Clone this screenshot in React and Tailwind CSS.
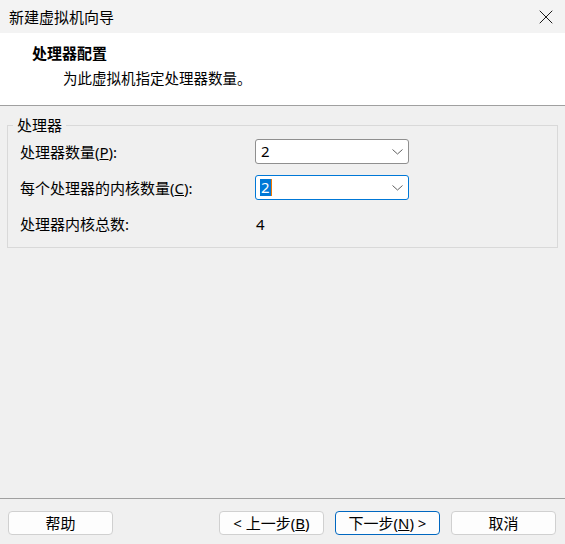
import { X } from 'lucide-react';

const font = "font-['Noto_Sans','Noto_Sans_CJK_SC',sans-serif]";

function Chevron() {
    return (
        <svg width="11" height="6" viewBox="0 0 11 6" className="shrink-0">
            <path d="M0.5 0.5 L5.5 5 L10.5 0.5" fill="none" stroke="#606060" strokeWidth="1" />
        </svg>
    );
}

function Combo({ value, focused }) {
    return (
        <div className={`w-[154px] h-[25px] bg-white rounded-[3px] border flex items-center pl-[4px] pr-[5px] ${focused ? 'border-[#0078d7]' : 'border-[#8f8f8f]'}`}>
            {focused ? (
                <span className="flex items-center">
                    <span className="bg-[#0078d7] text-white leading-[17px] px-[1px]">{value}</span>
                    <span className="w-[1.5px] h-[17px] bg-[#f07800]" />
                </span>
            ) : (
                <span className="leading-[17px] px-[1px]">{value}</span>
            )}
            <span className="flex-1" />
            <Chevron />
        </div>
    );
}

function Btn({ children, primary }) {
    return (
        <button className={`w-[105px] h-[24px] rounded-[4px] bg-[#fdfdfd] border text-[15px] leading-none flex items-center justify-center ${primary ? 'border-[#0067c0]' : 'border-[#d0d0d0]'}`}>
            {children}
        </button>
    );
}

export default function App() {
    return (
        <div className={`w-[565px] h-[544px] bg-[#f0f0f0] flex flex-col text-black text-[15px] ${font}`}>
            {/* title bar */}
            <div className="h-[33px] bg-[#f3f3f3] flex items-center pl-[9px] pr-[7px]">
                <span className="leading-[20px]">新建虚拟机向导</span>
                <X className="ml-auto w-[24px] h-[24px] text-[#1a1a1a]" strokeWidth={1} />
            </div>

            {/* header */}
            <div className="h-[73px] bg-white border-b border-[#a0a0a0] pt-[10px]">
                <div className="pl-[32px] font-bold leading-[20px]">处理器配置</div>
                <div className="pl-[63px] mt-[5px] leading-[20px] text-[14.5px]">为此虚拟机指定处理器数量。</div>
            </div>

            {/* body */}
            <fieldset className="mx-[7px] mt-[11px] border border-[#d9d9d9]">
                <legend className="ml-[5px] px-[4px] leading-[16px]">处理器</legend>
                <div className="grid grid-cols-[235px_auto] items-center gap-y-[11px] px-[12px] pt-[6px] pb-[13px]">
                    <span className="leading-[20px]">处理器数量(<span className="underline">P</span>):</span>
                    <Combo value="2" />
                    <span className="leading-[20px]">每个处理器的内核数量(<span className="underline">C</span>):</span>
                    <Combo value="2" focused />
                    <span className="leading-[20px] mt-[3px]">处理器内核总数:</span>
                    <span className="leading-[20px] mt-[3px] pl-[1px]">4</span>
                </div>
            </fieldset>

            <div className="flex-1" />

            {/* footer */}
            <div className="border-t border-[#a0a0a0] pt-[12px] pb-[9px] pl-[8px] pr-[9px] flex items-center">
                <Btn>帮助</Btn>
                <div className="ml-auto flex gap-[11px]">
                    <Btn>&lt; 上一步(<span className="underline">B</span>)</Btn>
                    <Btn primary>下一步(<span className="underline">N</span>) &gt;</Btn>
                    <Btn>取消</Btn>
                </div>
            </div>
        </div>
    );
}
